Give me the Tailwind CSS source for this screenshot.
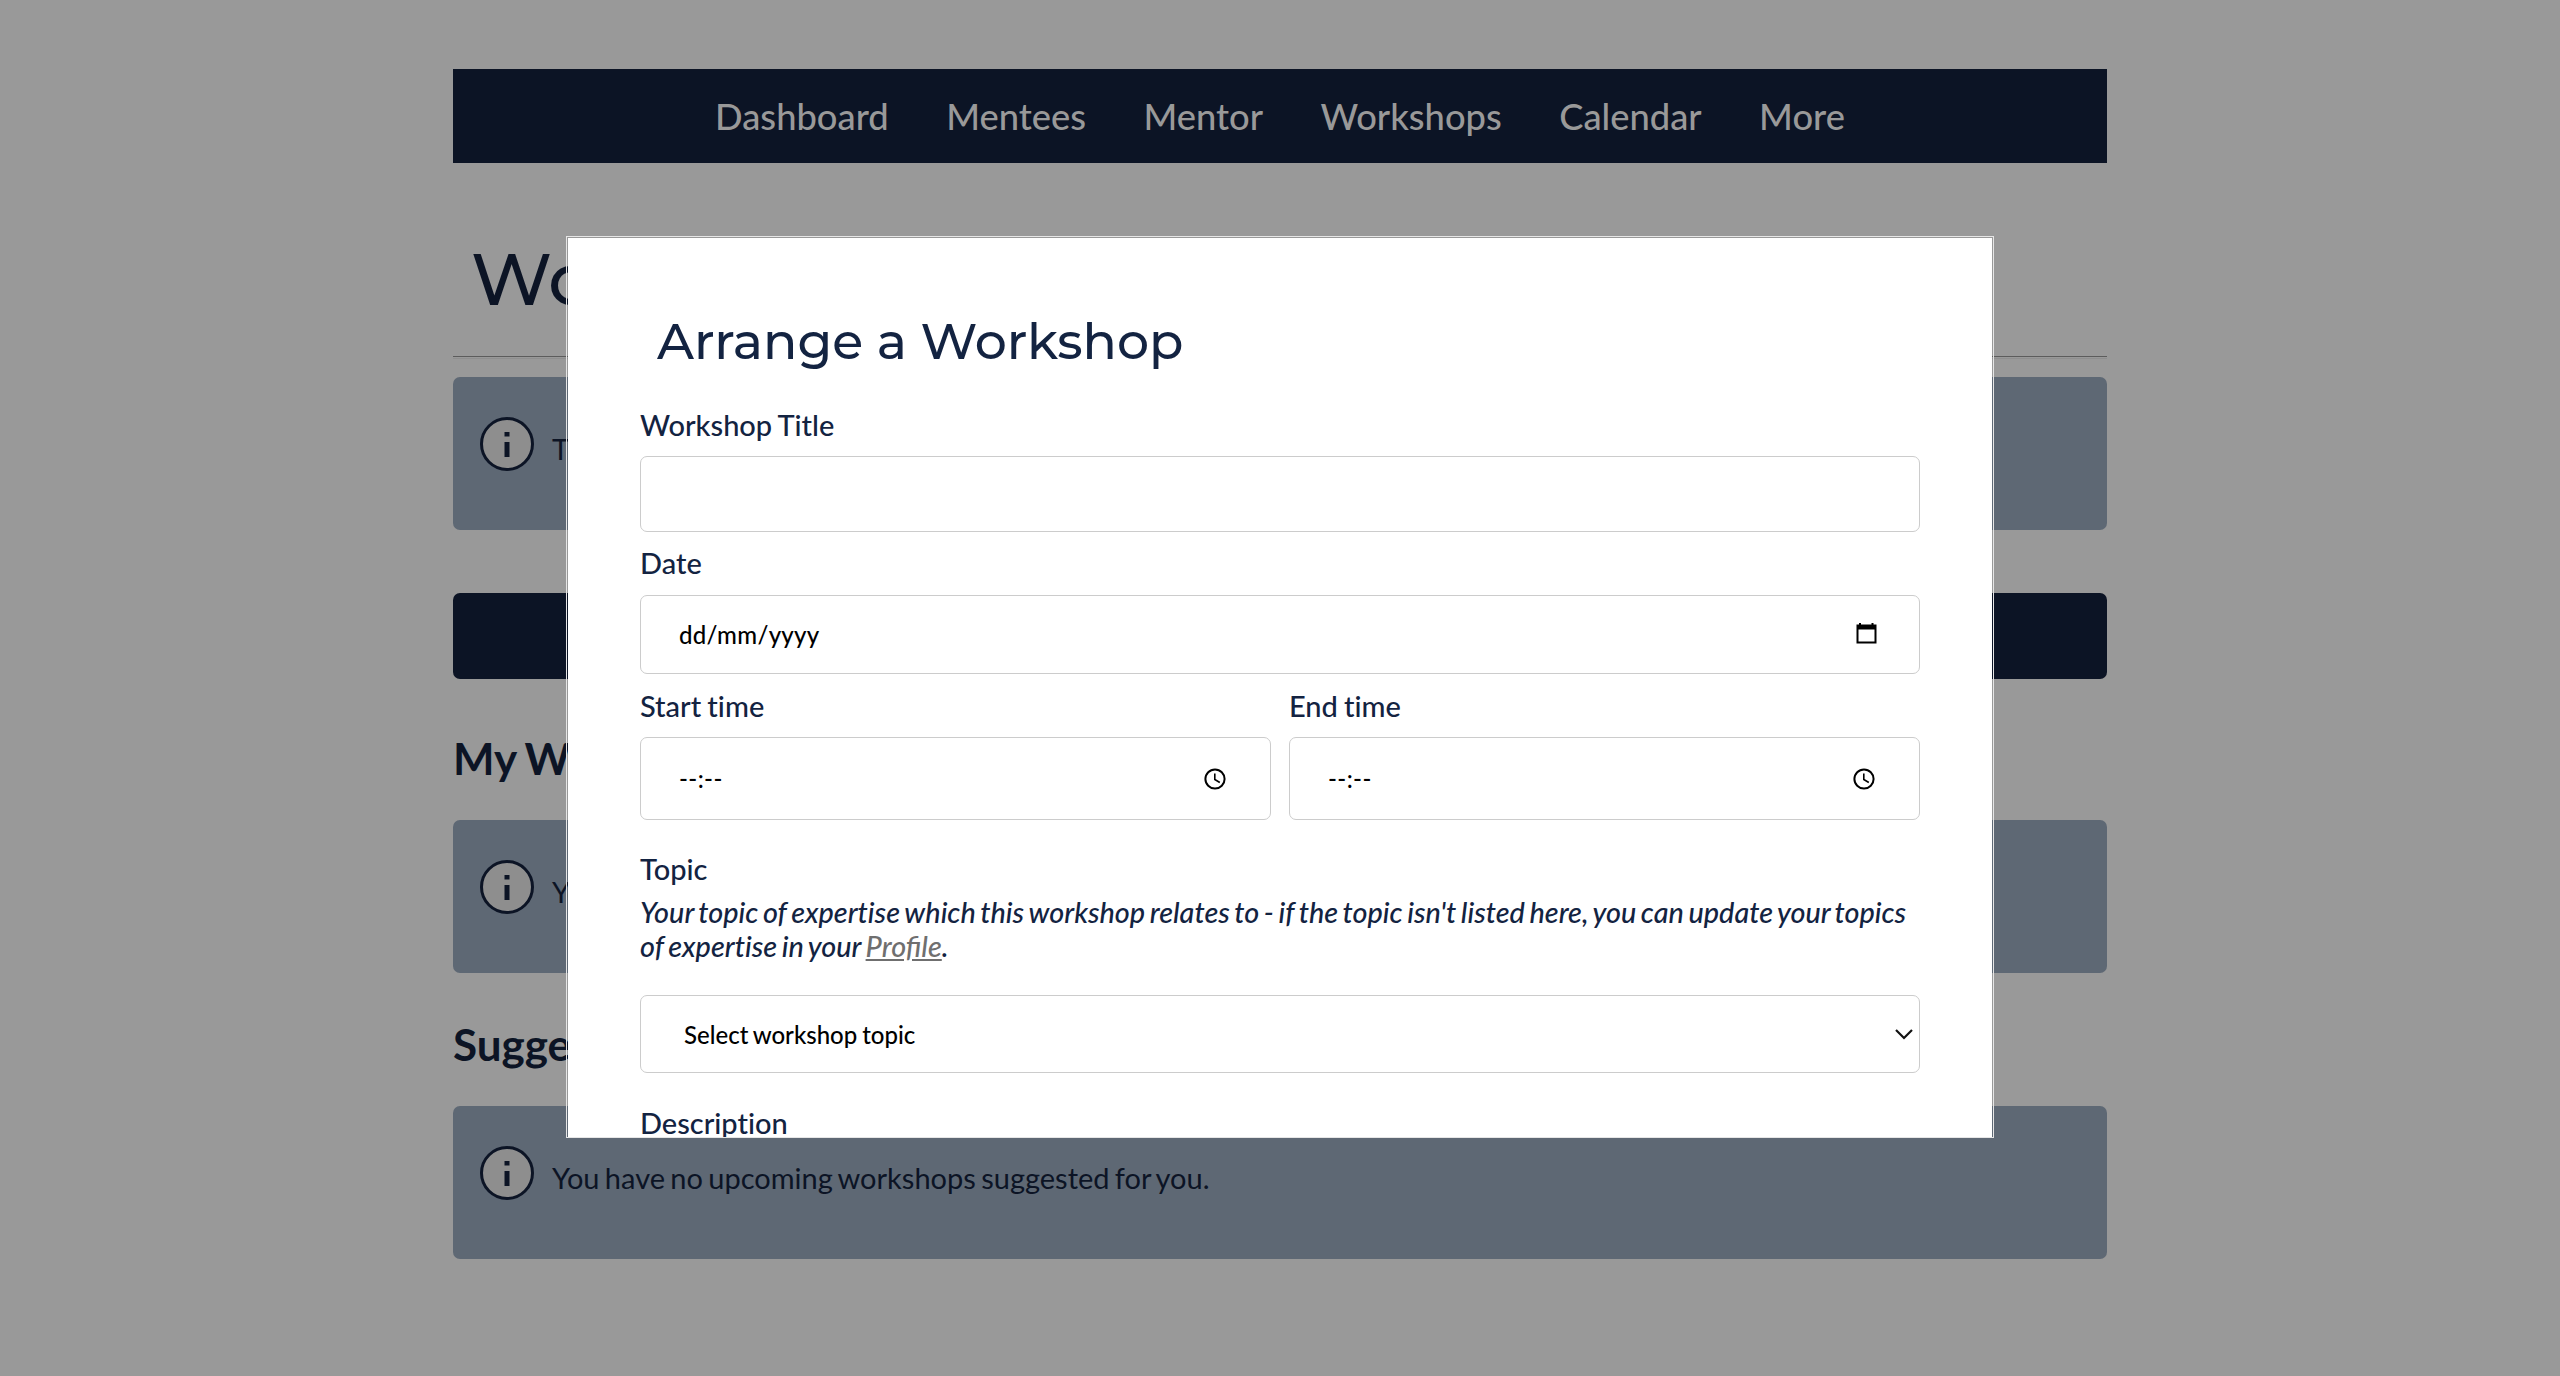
<!DOCTYPE html>
<html lang="en"><head><meta charset="utf-8"><title>Workshops</title>
<script src="https://cdn.jsdelivr.net/npm/@tailwindcss/browser@4"></script></head>
<body class="h-[1376px] overflow-hidden bg-[#999] font-[Lato,sans-serif] text-[#0c1425] [font-variant-ligatures:none]">
<main class="mx-auto w-[1654px] pt-[69px] [word-spacing:-2.1px]">
  <nav class="flex h-[94px] items-center justify-center gap-[57.5px] bg-[#0c1425] text-[36.3px] font-medium text-[#999]">
    <a>Dashboard</a><a>Mentees</a><a>Mentor</a><a>Workshops</a><a>Calendar</a><a>More</a>
  </nav>
  <h1 class="mt-[71px] h-[122px] pl-[18px] font-[Montserrat,Inter,sans-serif] text-[72px] leading-[90px] font-medium">Workshops</h1>
  <div role="separator" class="flex h-[3px] flex-col justify-between"><div class="h-px bg-[#5c5c5c]"></div><div class="h-px bg-[#8f8f8f]"></div></div>
  <section class="mt-[18px] flex h-[153px] rounded-[7px] bg-[#5e6874] pt-10 pl-[27px] text-[29px]">
    <svg class="size-[54px]" viewBox="0 0 54 54"><circle cx="27" cy="27" r="25.5" fill="#8e8e8e" stroke="#0c1425" stroke-width="3"/><path d="M24.5 15h5v4.500h-5zM24.500 25h5v15h-5z" fill="#0c1425"/></svg>
    <p class="mt-[14px] ml-[18px] leading-[35px]">There are no workshops to show.</p>
  </section>
  <div class="mt-[63px] h-[86px] rounded-[7px] bg-[#0c1425]"></div>
  <h2 class="mt-[53px] text-[44px] leading-[53px] font-bold">My Workshops</h2>
  <section class="mt-[35px] flex h-[153px] rounded-[7px] bg-[#5e6874] pt-10 pl-[27px] text-[29px]">
    <svg class="size-[54px]" viewBox="0 0 54 54"><circle cx="27" cy="27" r="25.5" fill="#8e8e8e" stroke="#0c1425" stroke-width="3"/><path d="M24.5 15h5v4.500h-5zM24.500 25h5v15h-5z" fill="#0c1425"/></svg>
    <p class="mt-[14px] ml-[18px] leading-[35px]">You have no workshops.</p>
  </section>
  <h2 class="mt-[45px] text-[44px] leading-[53px] font-bold">Suggested Workshops</h2>
  <section class="mt-[35px] flex h-[153px] rounded-[7px] bg-[#5e6874] pt-10 pl-[27px] text-[29px]">
    <svg class="size-[54px]" viewBox="0 0 54 54"><circle cx="27" cy="27" r="25.5" fill="#8e8e8e" stroke="#0c1425" stroke-width="3"/><path d="M24.5 15h5v4.500h-5zM24.500 25h5v15h-5z" fill="#0c1425"/></svg>
    <p class="mt-[14px] ml-[18px] leading-[35px]">You have no upcoming workshops suggested for you.</p>
  </section>
</main>
<div role="dialog" class="absolute top-[236px] left-[566px] h-[902px] w-[1428px] overflow-hidden border border-[#e6e6e6] p-px pb-0">
 <div class="h-full overflow-hidden bg-white px-[72px] pt-[72px] text-[29px] leading-[35px] font-medium text-[#132341] [word-spacing:-1.2px]">
  <h2 class="pl-[17px] font-[Montserrat,Inter,sans-serif] text-[50.5px] leading-[62px] font-medium [word-spacing:0px]">Arrange a Workshop</h2>
  <label class="mt-[35px] block">Workshop Title</label>
  <div class="mt-[14px] h-[76px] rounded-[7px] border border-[#ccc]"></div>
  <label class="mt-[13px] block">Date</label>
  <div class="mt-[15px] flex h-[79px] items-center justify-between rounded-[7px] border border-[#ccc] pr-[42px] pl-[38px] text-[24px] text-black">
   <span class="tracking-[0.3px]">dd/mm/yyyy</span>
   <svg class="mb-[3px] size-[21px]" viewBox="0 0 21 21"><path d="M4 0v3M16.500 0v3" stroke="#000" stroke-width="2"/><path d="M1.500 2.500h18v17h-18z" fill="none" stroke="#000" stroke-width="2"/><path d="M1 2h19v4.500H1z"/></svg>
  </div>
  <div class="mt-[14px] grid grid-cols-2 gap-[18px]">
   <div><label class="block">Start time</label>
    <div class="mt-[14px] flex h-[83px] items-center justify-between rounded-[7px] border border-[#ccc] pr-[44px] pl-[38px] text-[24px] text-black"><span class="tracking-[0.4px]">--:--</span>
    <svg class="size-[22px]" viewBox="0 0 22 22" fill="none" stroke="#000"><circle cx="11" cy="11" r="9.600" stroke-width="2"/><path d="M10.800 5.500v6l5 3" stroke-width="1.600"/></svg></div></div>
   <div><label class="block">End time</label>
    <div class="mt-[14px] flex h-[83px] items-center justify-between rounded-[7px] border border-[#ccc] pr-[44px] pl-[38px] text-[24px] text-black"><span class="tracking-[0.4px]">--:--</span>
    <svg class="size-[22px]" viewBox="0 0 22 22" fill="none" stroke="#000"><circle cx="11" cy="11" r="9.600" stroke-width="2"/><path d="M10.800 5.500v6l5 3" stroke-width="1.600"/></svg></div></div>
  </div>
  <label class="mt-[31px] block">Topic</label>
  <p class="mt-[9px] text-[28.8px] leading-[34px] whitespace-nowrap italic [word-spacing:-2px]">Your topic of expertise which this workshop relates to - if the topic isn't listed here, you can update your topics<br>of expertise in your <a class="text-[#6f6f6f] underline [font-variant-ligatures:normal]">Profile</a>.</p>
  <div class="mt-[32px] flex h-[78px] items-center justify-between rounded-[7px] border border-[#ccc] pr-[6px] pl-[43px] text-[24px] text-black"><span>Select workshop topic</span>
   <svg class="h-[11px] w-[18px]" viewBox="0 0 18 11" fill="none" stroke="#111" stroke-width="2.200"><path d="M1 1l8 8 8-8"/></svg></div>
  <label class="mt-[32px] block">Description</label>
 </div>
</div>
</body></html>
